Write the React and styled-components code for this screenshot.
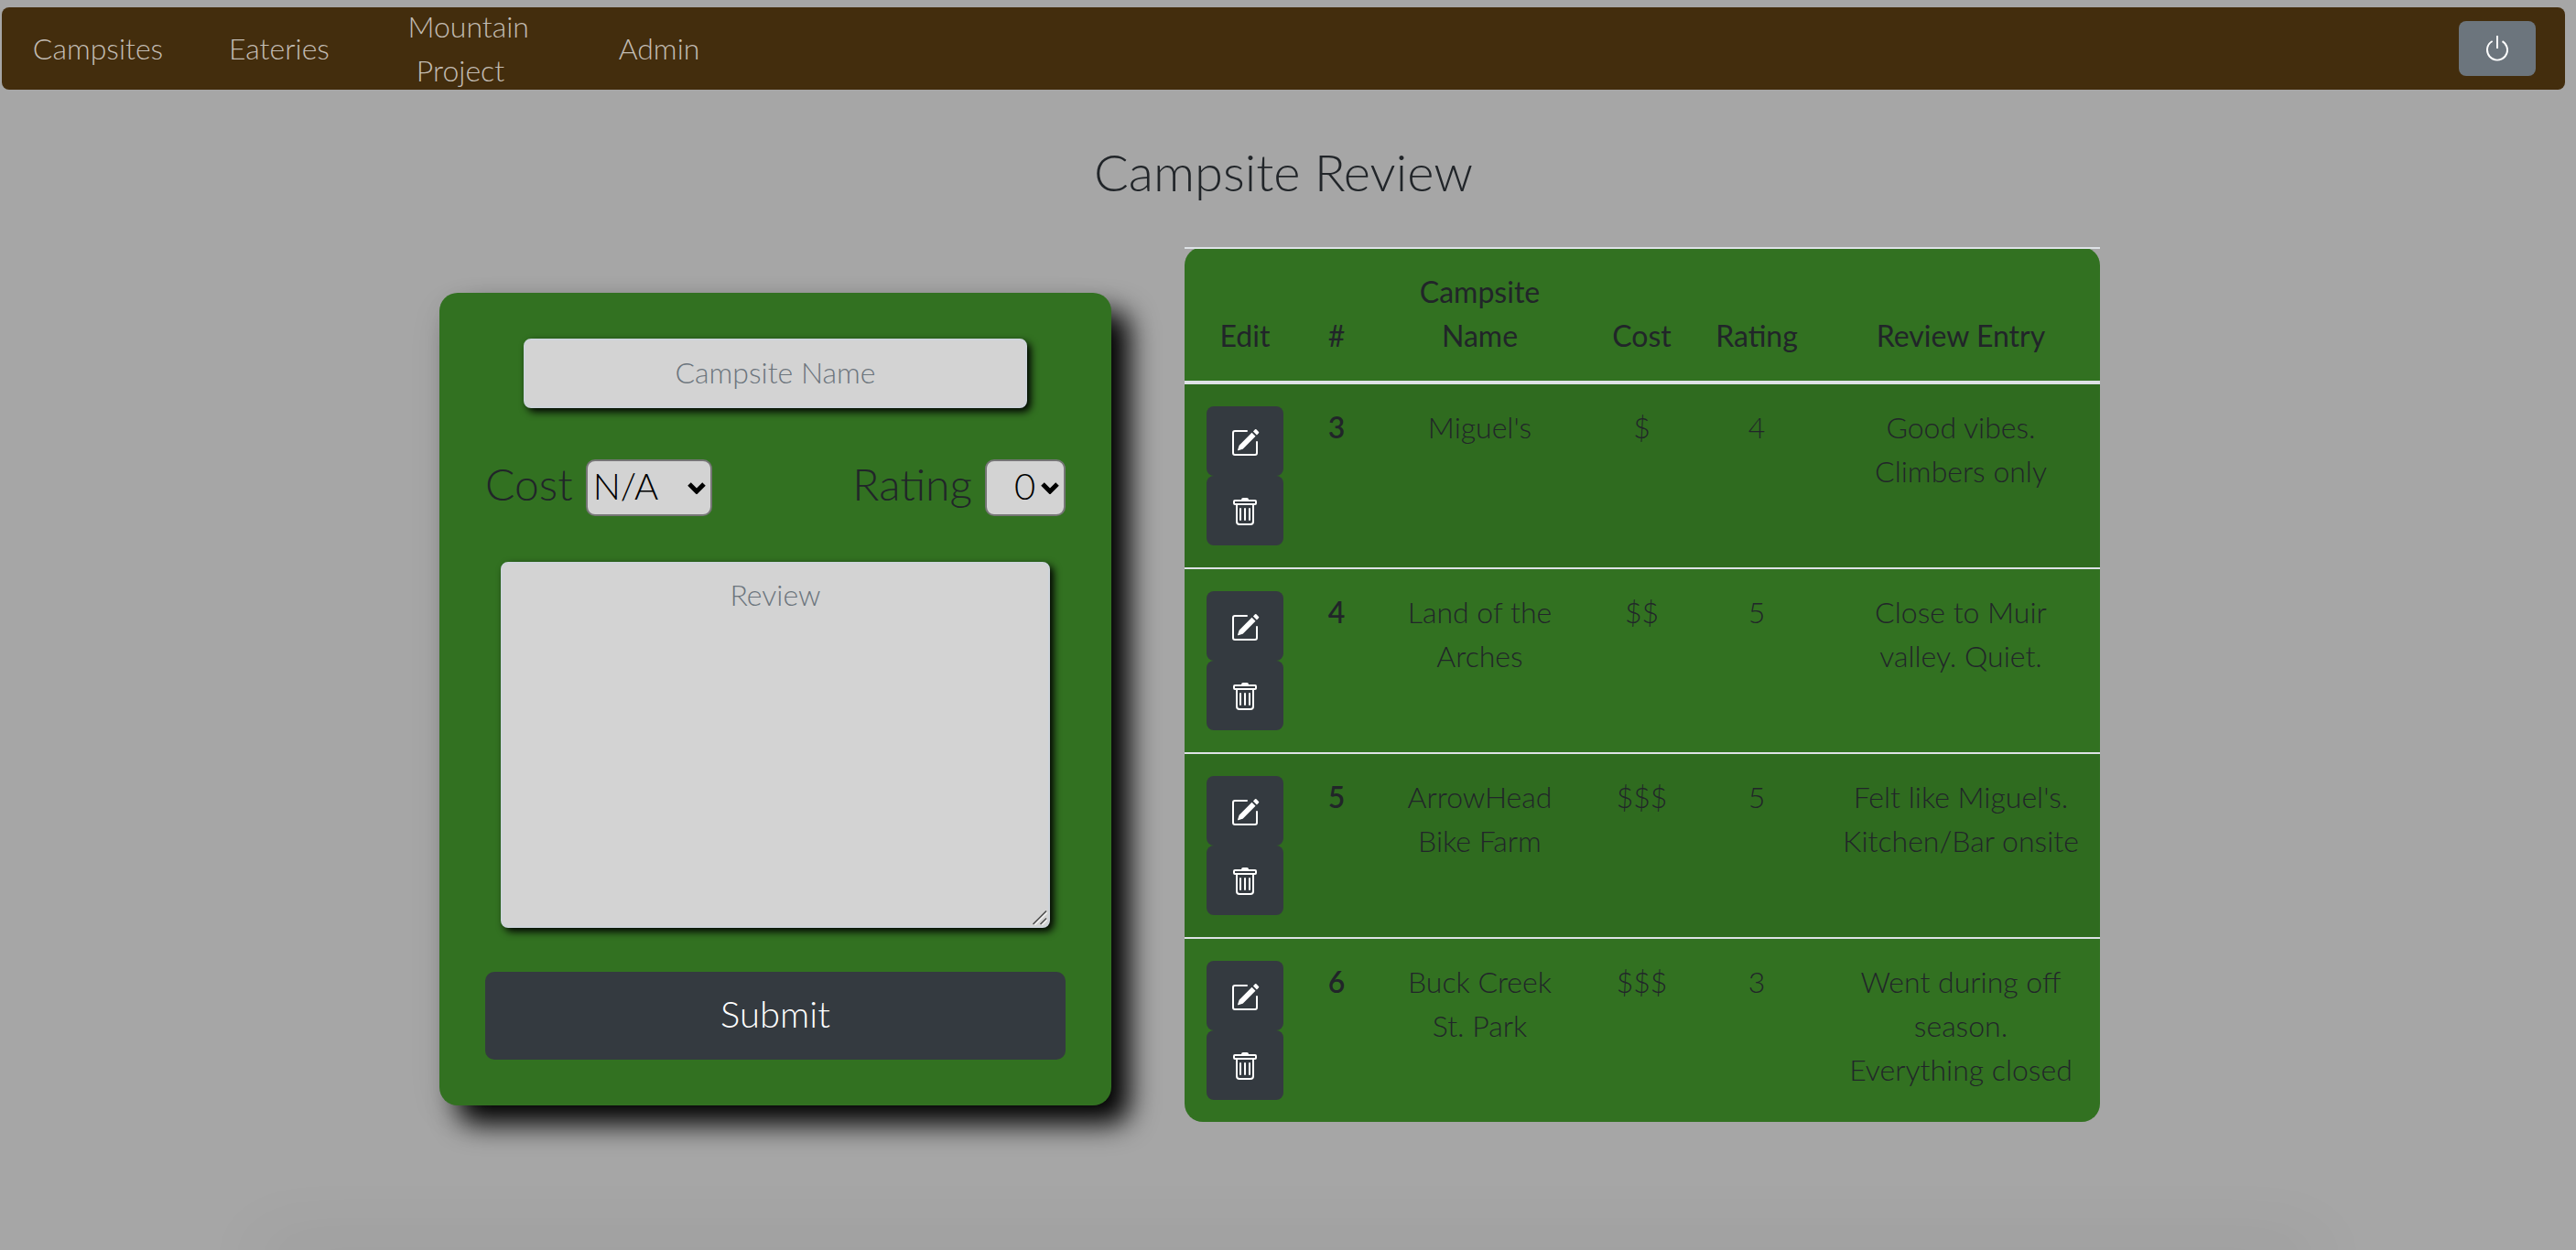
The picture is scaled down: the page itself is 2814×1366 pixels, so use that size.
import React from "react";
import styled, { createGlobalStyle, css } from "styled-components";
import { BsPencilSquare, BsPower, BsTrash } from "react-icons/bs";

const GlobalStyle = createGlobalStyle`
  *, *::before, *::after { box-sizing: border-box; }
  body {
    margin: 0;
    background: #a6a6a6;
    color: #212529;
    font-family: Lato, "Open Sans", sans-serif;
    font-size: 32px;
    font-weight: 300;
    line-height: 48px;
  }
  button, input, select, textarea { font: inherit; margin: 0; }
`;

const Page = styled.div`
  min-height: 100vh;
  padding: 8px 12px 0 2px;

  &::after {
    content: "";
    position: fixed;
    left: 10%;
    right: 10%;
    bottom: -20px;
    height: 20px;
    border-radius: 20px;
    box-shadow: 0 0 80px rgba(0, 0, 0, 0.14);
    pointer-events: none;
  }
`;

const NavBar = styled.nav`
  display: flex;
  align-items: center;
  justify-content: space-between;
  height: 90px;
  padding: 0 32px 0 6px;
  border-radius: 8px;
  background: #432d0d;
`;

const NavList = styled.ul`
  display: flex;
  align-items: center;
  margin: 0;
  padding: 0;
  list-style: none;
`;

const NavItem = styled.li`
  width: ${(p) => (p.$wide ? 236 : 198)}px;
  text-align: center;
`;

const NavLink = styled.a`
  display: inline-block;
  color: #c2bcb3;
  text-decoration: none;
`;

const IconButton = styled.button`
  display: flex;
  align-items: center;
  justify-content: center;
  width: 84px;
  height: 76px;
  padding: 4px 0 0;
  border: 0;
  border-radius: 8px;
  background: #343a40;
  color: #fff;
  font-size: 32px;
  cursor: pointer;
`;

const PowerButton = styled(IconButton)`
  height: 60px;
  padding: 0;
  background: #6c757d;
`;

const Title = styled.h1`
  margin: 56px 0 48px;
  font-size: 56px;
  font-weight: 300;
  line-height: 68px;
  text-align: center;
`;

const Content = styled.main`
  display: flex;
  align-items: flex-start;
  justify-content: center;
  gap: 80px;
  padding: 0 30px 50px 0;
`;

const ReviewForm = styled.form`
  display: flex;
  flex: 0 1 734px;
  flex-direction: column;
  align-items: center;
  gap: 48px;
  margin-top: 50px;
  padding: 50px;
  border-radius: 20px;
  background: #327121;
  box-shadow: 20px 20px 30px #000, 0 12px 40px rgba(0, 0, 0, 0.06);
`;

const field = css`
  display: block;
  border: 2px solid #ced4da;
  border-radius: 8px;
  background: #d3d3d3;
  box-shadow: 4px 4px 8px #000;
  color: #495057;
  text-align: center;

  &::placeholder { color: #6c757d; opacity: 1; }
`;

const NameInput = styled.input`
  ${field}
  width: 550px;
  max-width: 100%;
  height: 76px;
  padding: 8px 24px 12px;
`;

const ReviewBox = styled.div`
  position: relative;
  width: 600px;
  max-width: 100%;
`;

const ReviewInput = styled.textarea`
  ${field}
  width: 100%;
  height: 400px;
  padding: 10px 24px;
  resize: none;
`;

const ResizeGrip = styled.svg`
  position: absolute;
  right: 3px;
  bottom: 3px;
  width: 16px;
  height: 16px;
  pointer-events: none;
`;

const Choices = styled.div`
  display: flex;
  justify-content: space-between;
  width: 100%;
  padding: 8px 0 2px;
`;

const Choice = styled.div`
  display: flex;
  align-items: flex-start;
  gap: 14px;
`;

const ChoiceLabel = styled.label`
  font-size: 48px;
  line-height: 54px;
`;

const SelectBox = styled.div`
  position: relative;
`;

const Select = styled.select`
  display: block;
  width: ${(p) => (p.$narrow ? 88 : 138)}px;
  height: 62px;
  padding: 0 0 4px ${(p) => (p.$narrow ? 30 : 6)}px;
  border: 2px solid #767676;
  border-radius: 10px;
  background: #d3d3d3;
  color: #000;
  font-size: 40px;
  appearance: none;
`;

const Chevron = styled.svg`
  position: absolute;
  top: 24px;
  right: 7px;
  width: 20px;
  height: 14px;
  pointer-events: none;
`;

const SubmitButton = styled.button`
  width: 100%;
  height: 96px;
  padding: 0 0 4px;
  border: 0;
  border-radius: 10px;
  background: #343a40;
  color: #fff;
  font-size: 40px;
  cursor: pointer;
`;

const ReviewTable = styled.table`
  flex: 0 1 1000px;
  width: 1000px;
  border-spacing: 0;
  border-radius: 20px;
  background: #327121;
  table-layout: fixed;
  text-align: center;
`;

const Column = styled.col`
  width: ${(p) => p.$width}px;
`;

const HeadCell = styled.th`
  padding: 23px 22px 25px;
  border-top: 2px solid #dee2e6;
  border-bottom: 4px solid #dee2e6;
  font-weight: 400;
  vertical-align: bottom;
`;

const Cell = styled.td`
  padding: 23px 22px 0;
  vertical-align: top;
`;

const NumberCell = styled(Cell).attrs({ as: "th", scope: "row" })`
  font-weight: 600;
`;

const ActionCell = styled(Cell)`
  padding: 24px;
`;

const Row = styled.tr`
  &:nth-child(odd) > * { background: rgba(0, 0, 0, 0.05); }
  &:not(:first-child) > * { border-top: 2px solid #dee2e6; }
`;

const columns = [
  { title: "Edit", width: 132 },
  { title: "#", width: 68 },
  { title: "Campsite Name", width: 245 },
  { title: "Cost", width: 109 },
  { title: "Rating", width: 142 },
  { title: "Review Entry" },
];

const reviews = [
  { id: 3, name: "Miguel's", cost: "$", rating: 4, entry: "Good vibes. Climbers only" },
  { id: 4, name: "Land of the Arches", cost: "$$", rating: 5, entry: "Close to Muir valley. Quiet." },
  { id: 5, name: "ArrowHead Bike Farm", cost: "$$$", rating: 5, entry: "Felt like Miguel's. Kitchen/Bar\u00a0onsite" },
  { id: 6, name: "Buck Creek St.\u00a0Park", cost: "$$$", rating: 3, entry: "Went during off season. Everything\u00a0closed" },
];

function SelectField({ id, label, options, narrow }) {
  return (
    <Choice>
      <ChoiceLabel htmlFor={id}>{label}</ChoiceLabel>
      <SelectBox>
        <Select id={id} $narrow={narrow}>
          {options.map((option) => (
            <option key={option}>{option}</option>
          ))}
        </Select>
        <Chevron viewBox="0 0 20 14" aria-hidden="true">
          <path d="M2 3 10 11 18 3" fill="none" stroke="#000" strokeWidth="5" />
        </Chevron>
      </SelectBox>
    </Choice>
  );
}

export default function App() {
  return (
    <>
      <GlobalStyle />
      <Page>
        <NavBar>
          <NavList>
            <NavItem><NavLink href="#campsites">Campsites</NavLink></NavItem>
            <NavItem><NavLink href="#eateries">Eateries</NavLink></NavItem>
            <NavItem>
              <NavLink href="#mountain-project">
                {"\u00a0\u00a0Mountain"}<br />Project
              </NavLink>
            </NavItem>
            <NavItem $wide><NavLink href="#admin">Admin</NavLink></NavItem>
          </NavList>
          <PowerButton type="button" aria-label="Log out"><BsPower /></PowerButton>
        </NavBar>

        <Title>Campsite Review</Title>

        <Content>
          <ReviewForm onSubmit={(event) => event.preventDefault()}>
            <NameInput type="text" placeholder="Campsite Name" aria-label="Campsite Name" />
            <Choices>
              <SelectField id="cost" label="Cost" options={["N/A", "$", "$$", "$$$"]} />
              <SelectField id="rating" label="Rating" options={[0, 1, 2, 3, 4, 5]} narrow />
            </Choices>
            <ReviewBox>
              <ReviewInput placeholder="Review" aria-label="Review" />
              <ResizeGrip viewBox="0 0 16 16" aria-hidden="true">
                <path d="M2 16 16 2M10 16l6-6" stroke="#f1f1f1" strokeWidth="1.5" />
                <path d="M.5 15 15 .5M8.5 15 15 8.5" stroke="#4a4a4a" strokeWidth="1.5" />
              </ResizeGrip>
            </ReviewBox>
            <SubmitButton type="submit">Submit</SubmitButton>
          </ReviewForm>

          <ReviewTable>
            <colgroup>
              {columns.map((column) => (
                <Column key={column.title} $width={column.width} />
              ))}
            </colgroup>
            <thead>
              <tr>
                {columns.map((column) => (
                  <HeadCell key={column.title} scope="col">{column.title}</HeadCell>
                ))}
              </tr>
            </thead>
            <tbody>
              {reviews.map((review) => (
                <Row key={review.id}>
                  <ActionCell>
                    <IconButton type="button" aria-label={`Edit ${review.name}`}><BsPencilSquare /></IconButton>
                    <IconButton type="button" aria-label={`Delete ${review.name}`}><BsTrash /></IconButton>
                  </ActionCell>
                  <NumberCell>{review.id}</NumberCell>
                  <Cell>{review.name}</Cell>
                  <Cell>{review.cost}</Cell>
                  <Cell>{review.rating}</Cell>
                  <Cell>{review.entry}</Cell>
                </Row>
              ))}
            </tbody>
          </ReviewTable>
        </Content>
      </Page>
    </>
  );
}
